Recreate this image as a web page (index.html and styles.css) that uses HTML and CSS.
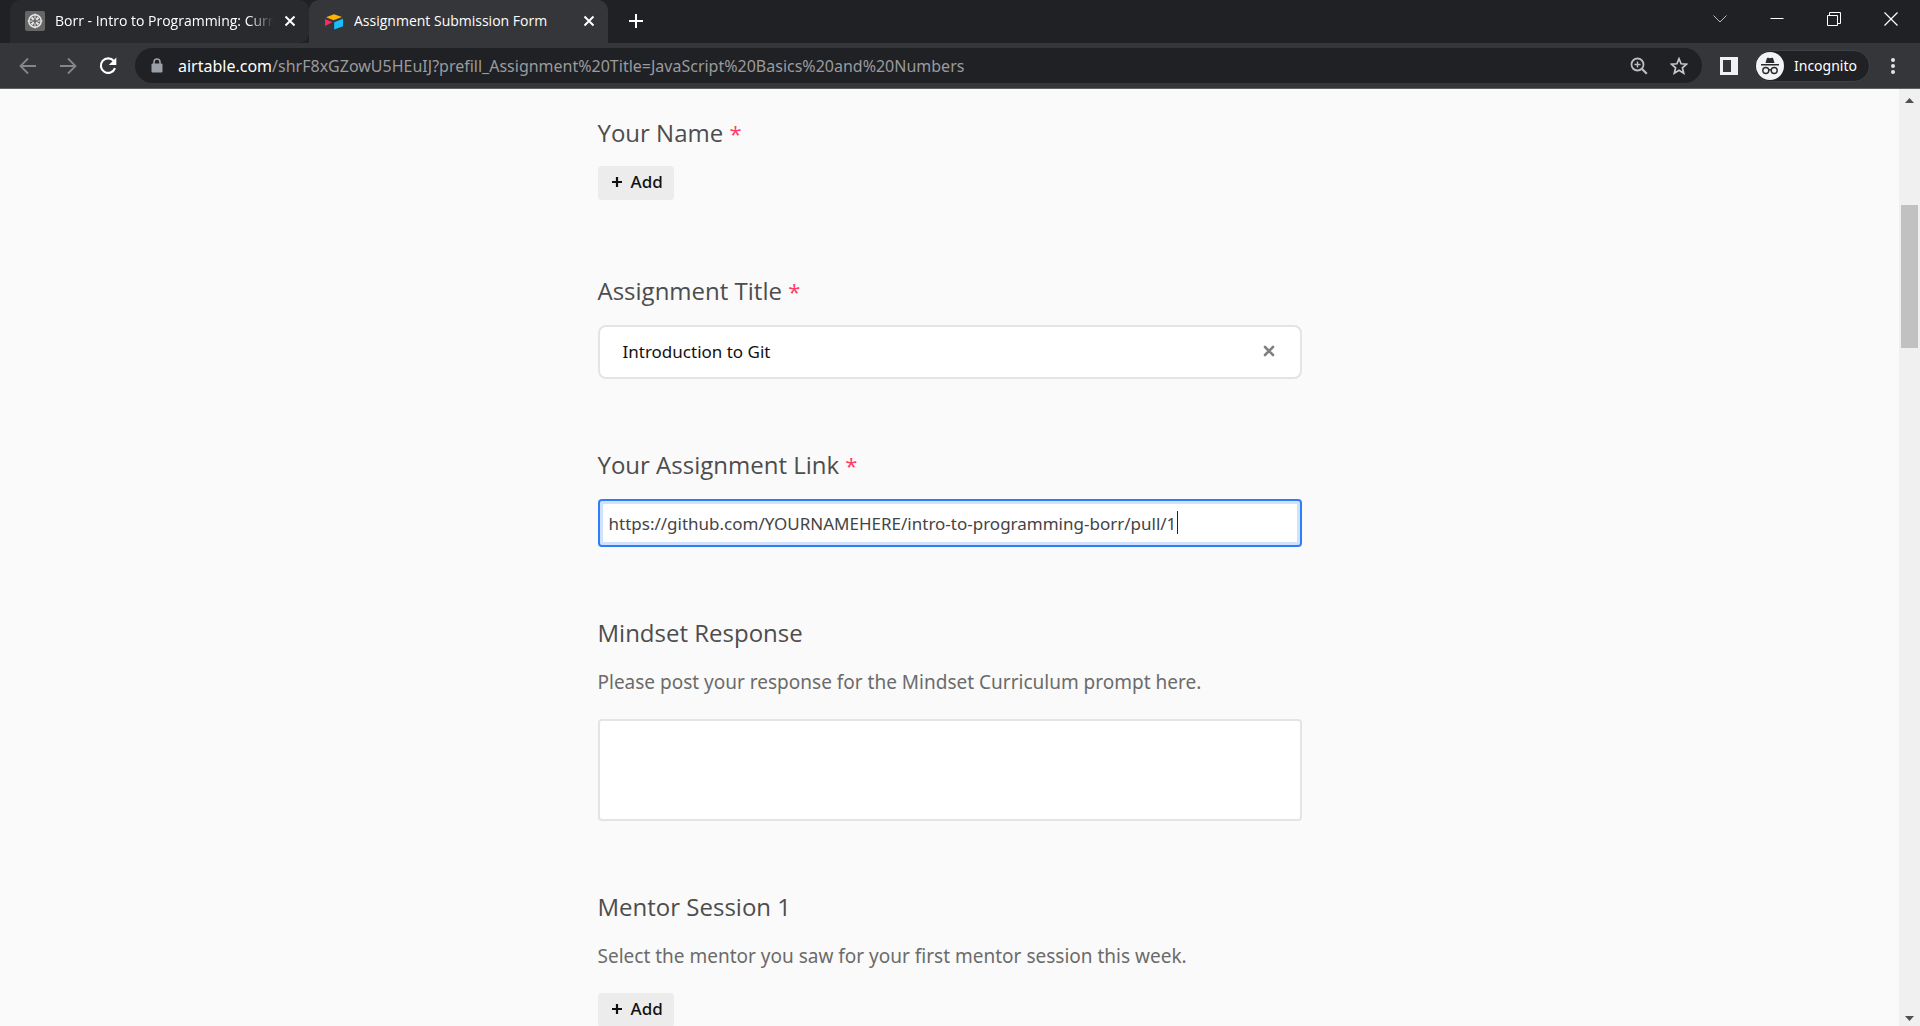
FILE: index.html
```html
<!DOCTYPE html>
<html lang="en">
<head>
<meta charset="utf-8">
<title>Assignment Submission Form</title>
<link rel="stylesheet" href="styles.css">
</head>
<body>
<header class="browser">
  <div class="tabstrip">
    <div class="tabs">
      <div class="tab">
        <svg class="favicon" width="20" height="20" viewBox="0 0 20 20" aria-hidden="true"><rect width="20" height="20" rx="2" fill="#666"/><g fill="none" stroke="#e6e6e6"><circle cx="10" cy="10" r="6.200" stroke-width="1.500"/><path d="M10 2.500v5M10 12.500v5M2.500 10h5M12.500 10h5" stroke-width="1"/><path d="M6.500 6.500l2.300 2.300M13.500 6.500l-2.300 2.300M6.500 13.500l2.300-2.300M13.500 13.500l-2.300-2.300" stroke-width="2"/></g></svg>
        <span class="tab-title fade">Borr - Intro to Programming: Curr</span>
        <button class="icon-button" aria-label="Close tab"><svg width="12" height="12" viewBox="0 0 12 12"><path d="M1.500 1.500l9 9M10.500 1.500l-9 9" stroke="#fff" stroke-width="2"/></svg></button>
      </div>
      <div class="tab active">
        <svg class="favicon" width="20" height="20" viewBox="0 0 20 20" aria-hidden="true"><path d="M2 6.300L10 3.200l8 2.900-8.400 3.200z" fill="#fcb400"/><path d="M1 8l7.400 3.300L1 15z" fill="#f82b60"/><path d="M10.200 11.200L19 7.800v7.400l-8.800 3.400z" fill="#18bfff"/></svg>
        <span class="tab-title">Assignment Submission Form</span>
        <button class="icon-button" aria-label="Close tab"><svg width="12" height="12" viewBox="0 0 12 12"><path d="M1.500 1.500l9 9M10.500 1.500l-9 9" stroke="#fff" stroke-width="2"/></svg></button>
      </div>
      <button class="icon-button new-tab" aria-label="New tab"><svg width="16" height="16" viewBox="0 0 16 16"><path d="M8 1v14M1 8h14" stroke="#fff" stroke-width="2"/></svg></button>
    </div>
    <div class="window-controls">
      <button class="icon-button" aria-label="Search tabs"><svg width="14" height="14" viewBox="0 0 14 14"><path d="M.5 3.500L7 10l6.500-6.500" fill="none" stroke="#bbb"/></svg></button>
      <button class="icon-button" aria-label="Minimize"><svg width="14" height="14" viewBox="0 0 14 14"><path d="M.5 6.500h13" stroke="#fff"/></svg></button>
      <button class="icon-button" aria-label="Restore"><svg width="14" height="14" viewBox="0 0 14 14"><path d="M.5 3.500h10v10H.5zM2.500 3V.5h11v11H11" fill="none" stroke="#fff"/></svg></button>
      <button class="icon-button" aria-label="Close"><svg width="14" height="14" viewBox="0 0 14 14"><path d="M.5.5l13 13M13.500.5l-13 13" stroke="#fff" stroke-width="1.200"/></svg></button>
    </div>
  </div>
  <div class="toolbar">
    <nav class="navigation" aria-label="History">
      <button class="icon-button" aria-label="Back"><svg width="20" height="20" viewBox="0 0 20 20"><path d="M18 10H3M10 2.500L2.500 10l7.500 7.500" fill="none" stroke="#85868a" stroke-width="1.800"/></svg></button>
      <button class="icon-button" aria-label="Forward"><svg width="20" height="20" viewBox="0 0 20 20"><path d="M2 10h15M10 2.500l7.500 7.500-7.500 7.500" fill="none" stroke="#85868a" stroke-width="1.800"/></svg></button>
      <button class="icon-button" aria-label="Reload"><svg width="20" height="20" viewBox="0 0 20 20"><path d="M15.800 5A7.300 7.300 0 1 0 17 12.200" fill="none" stroke="#fff" stroke-width="2.200"/><path d="M18.300 1.500V9h-7.500z" fill="#fff"/></svg></button>
    </nav>
    <div class="omnibox">
      <svg width="12" height="16" viewBox="0 0 12 16" aria-hidden="true"><rect x=".5" y="5.500" width="11" height="9" rx="1" fill="#9aa0a6"/><path d="M3 6V4a3 3 0 0 1 6 0v2" fill="none" stroke="#9aa0a6" stroke-width="1.600"/></svg>
      <span class="url"><b>airtable.com</b>/shrF8xGZowU5HEuIJ?prefill_Assignment%20Title=JavaScript%20Basics%20and%20Numbers</span>
      <button class="icon-button" aria-label="Zoom"><svg width="18" height="18" viewBox="0 0 18 18"><g fill="none" stroke="#bdbdbd"><circle cx="7.500" cy="7.500" r="6" stroke-width="1.800"/><path d="M11.800 11.800l5 5" stroke-width="2.200"/><path d="M7.500 4.500v6M4.500 7.500h6" stroke-width="1.400"/></g></svg></button>
      <button class="icon-button" aria-label="Bookmark"><svg width="18" height="18" viewBox="0 0 18 18"><path d="M9 1.700l2.100 5.100 5.500.4-4.200 3.600 1.300 5.400L9 13.300l-4.700 2.900 1.300-5.400L1.400 7.200l5.500-.4z" fill="none" stroke="#c8c8c8" stroke-width="1.700"/></svg></button>
    </div>
    <button class="icon-button side-panel" aria-label="Side panel"><svg width="18" height="18" viewBox="0 0 18 18"><path fill="#f1f1f3" fill-rule="evenodd" d="M0 0h18v18H0zM3 3v12h8V3z"/></svg></button>
    <button class="profile">
      <svg width="28" height="28" viewBox="0 0 28 28" aria-hidden="true"><circle cx="14" cy="14" r="14" fill="#f1f3f4"/><path d="M9.500 11l1.300-4.600q.4-1 1.400-.6l1.800.5 1.800-.5q1-.4 1.400.6l1.300 4.600zM5 12h18v1.400H5z" fill="#292a2d"/><g fill="none" stroke="#292a2d" stroke-width="1.400"><circle cx="9.800" cy="18.500" r="3"/><circle cx="18.200" cy="18.500" r="3"/><path d="M12.800 18.200q1.200-.8 2.400 0"/></g></svg>
      <span>Incognito</span>
    </button>
    <button class="icon-button menu" aria-label="Menu"><svg width="6" height="18" viewBox="0 0 6 18"><g fill="#e4e4e6"><circle cx="3" cy="3" r="2"/><circle cx="3" cy="9" r="2"/><circle cx="3" cy="15" r="2"/></g></svg></button>
  </div>
</header>
<div class="viewport">
  <main class="page">
    <form class="form">
      <section class="field linked">
        <h2>Your Name <span class="required">*</span></h2>
        <button type="button" class="add"><svg width="12" height="12" viewBox="0 0 12 12"><path d="M6 1v10M1 6h10" stroke="#111" stroke-width="2.200"/></svg>Add</button>
      </section>
      <section class="field">
        <h2>Assignment Title <span class="required">*</span></h2>
        <div class="choice">
          <span>Introduction to Git</span>
          <button type="button" class="icon-button" aria-label="Clear"><svg width="12" height="12" viewBox="0 0 12 12"><path d="M2 2l8 8M10 2l-8 8" stroke="#808080" stroke-width="2.600" stroke-linecap="round"/></svg></button>
        </div>
      </section>
      <section class="field">
        <h2><label for="link">Your Assignment Link <span class="required">*</span></label></h2>
        <div class="link-box">
          <input id="link" type="text" value="https://github.com/YOURNAMEHERE/intro-to-programming-borr/pull/1">
          <span class="caret"></span>
        </div>
      </section>
      <section class="field">
        <h2><label for="mindset">Mindset Response</label></h2>
        <p>Please post your response for the Mindset Curriculum prompt here.</p>
        <textarea id="mindset"></textarea>
      </section>
      <section class="field linked">
        <h2>Mentor Session 1</h2>
        <p>Select the mentor you saw for your first mentor session this week.</p>
        <button type="button" class="add"><svg width="12" height="12" viewBox="0 0 12 12"><path d="M6 1v10M1 6h10" stroke="#111" stroke-width="2.200"/></svg>Add</button>
      </section>
    </form>
  </main>
  <div class="scrollbar" aria-hidden="true">
    <svg width="9" height="5" viewBox="0 0 9 5"><path d="M0 5L4.500 0 9 5z" fill="#505050"/></svg>
    <div class="track"><div class="thumb"></div></div>
    <svg width="9" height="5" viewBox="0 0 9 5"><path d="M0 0l4.500 5L9 0z" fill="#505050"/></svg>
  </div>
</div>
</body>
</html>
```
FILE: styles.css
```css
* { box-sizing: border-box; }

body {
  margin: 0;
  height: 100vh;
  display: flex;
  flex-direction: column;
  overflow: hidden;
  background: #fafafa;
  font-family: "Noto Sans", "Open Sans", sans-serif;
}

button, input, textarea { font: inherit; }
svg { display: block; flex: none; }

.icon-button {
  display: flex;
  padding: 0;
  border: 0;
  background: none;
}

/* Browser frame */
.browser {
  flex: none;
  color: #fff;
  background: #35363a;
  border-bottom: 1px solid #606164;
}

.tabstrip {
  display: flex;
  justify-content: space-between;
  height: 43px;
  padding-left: 10px;
  background: #202124;
}

.tabs { display: flex; align-items: stretch; }

.tab {
  display: flex;
  align-items: center;
  gap: 10px;
  width: 299px;
  padding: 0 13px 2px 15px;
  background: #292a2d;
  border-radius: 10px 10px 10px 0;
  font-family: "Open Sans", "Noto Sans", sans-serif;
  font-size: 14px;
}

.tab.active {
  background: #35363a;
  border-radius: 10px 10px 0 0;
}

.tab-title {
  flex: 1;
  overflow: hidden;
  white-space: nowrap;
}

.fade { mask-image: linear-gradient(to right, #000 88%, transparent); }

.new-tab { align-items: center; margin-left: 20px; padding-bottom: 1px; }

.window-controls {
  display: flex;
  align-items: center;
  gap: 43px;
  padding: 0 22px 6px 0;
}

.toolbar {
  display: flex;
  align-items: center;
  height: 45px;
  padding: 0 24px 0 18px;
}

.navigation { display: flex; gap: 20px; }

.omnibox {
  display: flex;
  flex: 1;
  align-items: center;
  gap: 22px;
  min-width: 0;
  height: 35px;
  margin-left: 17px;
  padding: 0 14px 0 16px;
  border-radius: 18px;
  background: #202124;
  font-size: 16px;
}

.url {
  flex: 1;
  margin-left: -7px;
  overflow: hidden;
  white-space: nowrap;
  color: #9a9b9e;
}

.url b { font-weight: 400; color: #fff; }

.side-panel { margin-left: 18px; }

.profile {
  display: flex;
  align-items: center;
  gap: 10px;
  height: 32px;
  margin-left: 16px;
  padding: 0 12px 0 1px;
  border: 1px solid #404144;
  border-radius: 16px;
  background: #202124;
  color: #fff;
  font-size: 14px;
}

.menu { margin-left: 20px; }

/* Form */
.viewport { display: flex; flex: 1; min-height: 0; }

.page { flex: 1; overflow: hidden; }

.form {
  display: flex;
  flex-direction: column;
  gap: 70px;
  width: 100%;
  max-width: 704px;
  margin: 0 auto;
  padding-top: 28px;
}

.linked { padding-bottom: 5px; }

h2 {
  margin: 0 0 18px;
  font-family: "Open Sans", "Noto Sans", sans-serif;
  font-size: 24px;
  font-weight: 400;
  line-height: 32px;
  color: #4d4d4d;
}

.linked h2 { margin-bottom: 17px; }

.required { font-size: 22px; line-height: 1; color: #ff3b66; }

p {
  margin: 20px 0 24px;
  font-size: 19px;
  line-height: 26px;
  color: #6b6b6b;
}

.add {
  display: flex;
  align-items: center;
  gap: 8px;
  height: 34px;
  padding: 0 11px 2px 13px;
  border: 0;
  border-radius: 4px;
  background: #ececec;
  color: #111;
  font-size: 17px;
  font-weight: 500;
  line-height: 24px;
}

.choice {
  display: flex;
  align-items: center;
  justify-content: space-between;
  height: 54px;
  padding: 0 25px 2px 23px;
  border: 2px solid #e4e4e4;
  border-radius: 8px;
  background: #fff;
  color: #111;
  font-size: 17px;
}

.link-box { position: relative; }

.link-box input {
  display: block;
  width: 100%;
  height: 48px;
  padding: 0 9px;
  border: 2px solid #2d7ff9;
  border-radius: 4px;
  box-shadow: inset 0 0 0 3px #d0e2fd;
  background: #fff;
  color: #444;
  font-size: 17px;
}

.caret {
  position: absolute;
  top: 12px;
  left: 579px;
  width: 1px;
  height: 23px;
  background: #222;
}

textarea {
  display: block;
  width: 100%;
  height: 102px;
  border: 2px solid #e4e4e4;
  border-radius: 4px;
  background: #fff;
  resize: none;
}

.scrollbar {
  display: flex;
  flex-direction: column;
  align-items: center;
  width: 21px;
  padding: 9px 0 5px;
  background: #f0f0f0;
}

.track { flex: 1; align-self: stretch; padding: 102px 2px 0; }

.thumb { height: 143px; background: #c1c1c1; }
```
